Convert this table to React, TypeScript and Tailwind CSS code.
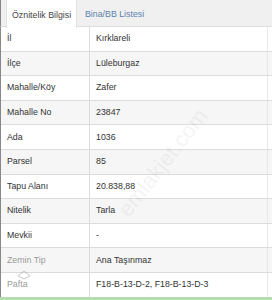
import React from "react";

const rows: [string, string][] = [
  ["İl", "Kırklareli"],
  ["İlçe", "Lüleburgaz"],
  ["Mahalle/Köy", "Zafer"],
  ["Mahalle No", "23847"],
  ["Ada", "1036"],
  ["Parsel", "85"],
  ["Tapu Alanı", "20.838,88"],
  ["Nitelik", "Tarla"],
  ["Mevkii", "-"],
  ["Zemin Tip", "Ana Taşınmaz"],
  ["Pafta", "F18-B-13-D-2, F18-B-13-D-3"],
];

export default function App() {
  return (
    <div
      className="relative w-[272px] h-[300px] overflow-hidden bg-white text-[#333]"
      style={{ fontFamily: '"Liberation Sans", Arial, sans-serif' }}
    >
      <div className="flex h-[27px] bg-[#f0f0f0] border-l border-[#888] border-b border-b-[#ddd]">
        <div className="ml-[5px] w-[71px] h-[28px] bg-white border-x border-[#e2e2e2] flex items-center pt-[3px] pl-[5px] text-[8.8px] text-[#444]">
          Öznitelik Bilgisi
        </div>
        <div className="flex items-center pt-[3px] pl-[8px] text-[8.8px] text-[#5a82ad]">
          Bina/BB Listesi
        </div>
      </div>
      <div className="border-l border-[#888]">
        {rows.map(([k, v], i) => (
          <div
            key={k}
            className={`flex h-[24.6px] border-b border-[#dcdcdc] text-[8.8px] ${
              i % 2 === 1 ? "bg-[#f6f6f6]" : "bg-white"
            }`}
          >
            <div
              className={`w-[89px] pl-[6px] flex items-center border-r border-[#dcdcdc] ${
                i >= 9 ? "text-[#9a9a9a]" : ""
              }`}
            >
              {k}
            </div>
            <div className="flex-1 pl-[6px] flex items-center border-r border-[#e8e8e8] mr-[4px]">
              {v}
            </div>
          </div>
        ))}
      </div>
      <div className="absolute left-0 right-0 top-[297px] h-[3px] bg-[#b5dcae]" />
      <div className="absolute left-[98px] top-[146px] text-[22px] text-[#000] opacity-[0.04] -rotate-[52deg] pointer-events-none whitespace-nowrap">
        emlakjet.com
      </div>
      <svg className="absolute left-[17px] top-[270px] opacity-40" width="14" height="10" viewBox="0 0 14 10">
        <path d="M1 6 L7 1 L13 6 L7 9 Z" fill="none" stroke="#777" strokeWidth="1" />
      </svg>
    </div>
  );
}
